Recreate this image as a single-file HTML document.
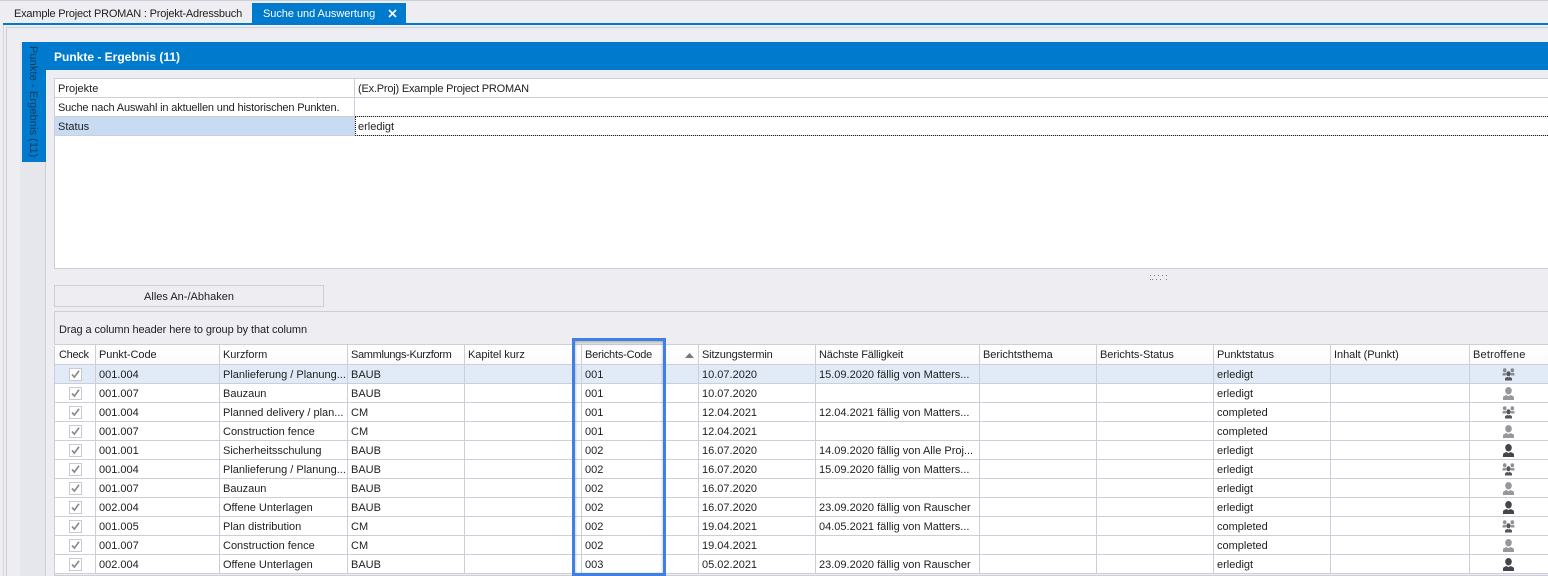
<!DOCTYPE html>
<html><head><meta charset="utf-8"><style>
html,body{margin:0;padding:0}
body{width:1548px;height:576px;overflow:hidden;position:relative;background:#eeeef2;font-family:"Liberation Sans",sans-serif;font-size:11px;color:#1e1e1e}
.a{position:absolute;box-sizing:border-box}
.t{position:absolute;white-space:nowrap;line-height:14px}
table{position:absolute;left:54px;top:345px;border-collapse:collapse;table-layout:fixed;width:1494px;background:#fff}
td,th{box-sizing:border-box;height:19px;padding:2px 0 0 3px;border:1px solid #ccced8;border-top:0;font-weight:normal;text-align:left;white-space:nowrap;overflow:hidden;font-size:11px;line-height:16px}
th{height:19px;padding:0 0 0 3px;line-height:18px;background:linear-gradient(#fff,#fafafa);border-top:1px solid #fff;position:relative;letter-spacing:-.05px}
th:last-child,td:last-child{border-right:0}
td:first-child,th:first-child{padding-left:4px}
tr.s td{background:#e1ebf8}
td:first-child{padding:0;text-align:center}
td svg{display:block;margin:0 auto}
td:last-child{padding:0 2px 0 0}
</style></head><body>
<svg width="0" height="0" style="position:absolute"><defs>
<symbol id="c" viewBox="0 0 13 13"><rect x=".5" y=".5" width="12" height="12" fill="#fff" stroke="#c9c9cf"/><path d="M3 6.500l2.400 2.600L10 2.800" fill="none" stroke="#8a8a8a" stroke-width="1.700"/></symbol>
<symbol id="p" viewBox="0 0 13 13"><ellipse cx="6.500" cy="3.700" rx="3.300" ry="3.700"/><path d="M1 13v-2.300C1 9 3 8.800 4.600 8L6.500 9.300 8.400 8C10 8.800 12 9 12 10.700V13z"/></symbol>
<symbol id="g" viewBox="0 0 13 13"><ellipse cx="2.700" cy="2.300" rx="1.800" ry="2.100" fill-opacity=".65"/><ellipse cx="10.300" cy="2.300" rx="1.800" ry="2.100" fill-opacity=".65"/><path d="M.5 7.500V6C.7 5 1.700 4.800 2.700 5.200 3.500 4.900 4.400 5.200 4.600 6L3.800 7.500zM12.500 7.500V6C12.300 5 11.300 4.800 10.300 5.200 9.500 4.900 8.600 5.200 8.400 6L9.200 7.500z" fill-opacity=".65"/><ellipse cx="6.500" cy="5.800" rx="2.100" ry="2.500"/><path d="M3 12.500v-1.600C3 9.500 5 9.500 5.500 8.800L6.500 9.700l1-.9C8 9.500 10 9.500 10 10.900v1.600z"/></symbol>
</defs></svg>

<div class="a" style="left:0;top:0;width:1548px;height:1px;background:#ccced8"></div>
<div class="t" style="left:14px;top:7px;letter-spacing:-.2px">Example Project PROMAN : Projekt-Adressbuch</div>
<div class="a" style="left:252px;top:3px;width:154px;height:20px;background:#007acc"></div>
<div class="t" style="left:263px;top:7px;color:#fff;letter-spacing:-.05px">Suche und Auswertung</div>
<svg class="a" style="left:388px;top:9px" width="9" height="9" viewBox="0 0 9 9"><path d="M1 1l7 7M8 1L1 8" stroke="#fff" stroke-width="1.600"/></svg>
<div class="a" style="left:3px;top:23px;width:1545px;height:2px;background:#007acc"></div>

<div class="a" style="left:3px;top:25px;width:1545px;height:551px;border-left:1px solid #d6d7de"></div>
<div class="a" style="left:6px;top:27px;width:1542px;height:549px;border-left:1px solid #ccced8;border-top:1px solid #ccced8"></div>
<div class="a" style="left:20px;top:42px;width:26px;height:534px;background:#e6e7ec;border-right:1px solid #ccced8"></div>

<div class="a" style="left:22px;top:42px;width:24px;height:120px;background:#007acc"></div>
<div class="t" style="left:26px;top:46px;writing-mode:vertical-rl;line-height:14px;color:#123a5c;letter-spacing:.1px">Punkte - Ergebnis (11)</div>
<div class="a" style="left:46px;top:42px;width:1502px;height:28px;background:#007acc"></div>
<div class="t" style="left:54px;top:50px;color:#fff;font-weight:bold;font-size:12px">Punkte - Ergebnis (11)</div>

<div class="a" style="left:54px;top:78px;width:1494px;height:191px;background:#fff;border:1px solid #ccced8;border-right:0"></div>
<div class="a" style="left:55px;top:97px;width:1493px;height:1px;background:#ccced8"></div>
<div class="a" style="left:55px;top:116px;width:1493px;height:1px;background:#ccced8"></div>
<div class="a" style="left:55px;top:135px;width:1493px;height:1px;background:#ccced8"></div>
<div class="a" style="left:55px;top:117px;width:299px;height:18px;background:#c7dbf3"></div>
<div class="a" style="left:354px;top:79px;width:1px;height:56px;background:#ccced8"></div>
<div class="a" style="left:355px;top:116px;width:1193px;height:20px;border-top:1px dotted #222;border-bottom:1px dotted #222;border-left:1px dotted #222"></div>
<div class="t" style="left:58px;top:82px">Projekte</div>
<div class="t" style="left:358px;top:82px;letter-spacing:-.2px">(Ex.Proj) Example Project PROMAN</div>
<div class="t" style="left:58px;top:101px;letter-spacing:-.16px">Suche nach Auswahl in aktuellen und historischen Punkten.</div>
<div class="t" style="left:58px;top:120px">Status</div>
<div class="t" style="left:358px;top:120px">erledigt</div>

<svg class="a" style="left:1150px;top:275px" width="18" height="6"><path d="M.5 0v1M4.500 0v1M8.500 0v1M12.500 0v1M16.500 0v1M.5 4v1M2.500 4v1M6.500 4v1M10.500 4v1M16.500 4v1" stroke="#77777f"/></svg>

<div class="a" style="left:54px;top:285px;width:270px;height:22px;border:1px solid #ccced8;background:#eeeef2"></div>
<div class="t" style="left:54px;top:290px;width:270px;text-align:center">Alles An-/Abhaken</div>

<div class="a" style="left:54px;top:311px;width:1494px;height:265px;border:1px solid #ccced8;border-right:0"></div>
<div class="t" style="left:59px;top:323px;letter-spacing:-.08px">Drag a column header here to group by that column</div>

<div class="a" style="left:54px;top:344px;width:1494px;height:1px;background:#ccced8"></div>
<table>
<colgroup><col style="width:41px"><col style="width:124px"><col style="width:128px"><col style="width:117px"><col style="width:117px"><col style="width:117px"><col style="width:117px"><col style="width:164px"><col style="width:117px"><col style="width:117px"><col style="width:117px"><col style="width:139px"><col style="width:79px"></colgroup>
<tr><th style="letter-spacing:-.3px">Check</th><th>Punkt-Code</th><th>Kurzform</th><th style="letter-spacing:-.33px">Sammlungs-Kurzform</th><th>Kapitel kurz</th><th style="letter-spacing:-.2px">Berichts-Code<svg style="position:absolute;right:4px;top:7px" width="9" height="5"><path d="M0 5L4.500 0 9 5z" fill="#77777f"/></svg></th><th style="letter-spacing:-.15px">Sitzungstermin</th><th style="letter-spacing:-.15px">Nächste Fälligkeit</th><th>Berichtsthema</th><th>Berichts-Status</th><th>Punktstatus</th><th>Inhalt (Punkt)</th><th style="letter-spacing:.2px">Betroffene</th></tr>
<tr class="s"><td><svg width="13" height="13"><use href="#c"/></svg></td><td>001.004</td><td>Planlieferung / Planung...</td><td>BAUB</td><td></td><td>001</td><td>10.07.2020</td><td>15.09.2020 fällig von Matters...</td><td></td><td></td><td>erledigt</td><td></td><td><svg width="13" height="13" fill="#55555c"><use href="#g"/></svg></td></tr>
<tr><td><svg width="13" height="13"><use href="#c"/></svg></td><td>001.007</td><td>Bauzaun</td><td>BAUB</td><td></td><td>001</td><td>10.07.2020</td><td></td><td></td><td></td><td>erledigt</td><td></td><td><svg width="13" height="13" fill="#98989c"><use href="#p"/></svg></td></tr>
<tr><td><svg width="13" height="13"><use href="#c"/></svg></td><td>001.004</td><td>Planned delivery / plan...</td><td>CM</td><td></td><td>001</td><td>12.04.2021</td><td>12.04.2021 fällig von Matters...</td><td></td><td></td><td>completed</td><td></td><td><svg width="13" height="13" fill="#55555c"><use href="#g"/></svg></td></tr>
<tr><td><svg width="13" height="13"><use href="#c"/></svg></td><td>001.007</td><td>Construction fence</td><td>CM</td><td></td><td>001</td><td>12.04.2021</td><td></td><td></td><td></td><td>completed</td><td></td><td><svg width="13" height="13" fill="#98989c"><use href="#p"/></svg></td></tr>
<tr><td><svg width="13" height="13"><use href="#c"/></svg></td><td>001.001</td><td>Sicherheitsschulung</td><td>BAUB</td><td></td><td>002</td><td>16.07.2020</td><td>14.09.2020 fällig von Alle Proj...</td><td></td><td></td><td>erledigt</td><td></td><td><svg width="13" height="13" fill="#44444a"><use href="#p"/></svg></td></tr>
<tr><td><svg width="13" height="13"><use href="#c"/></svg></td><td>001.004</td><td>Planlieferung / Planung...</td><td>BAUB</td><td></td><td>002</td><td>16.07.2020</td><td>15.09.2020 fällig von Matters...</td><td></td><td></td><td>erledigt</td><td></td><td><svg width="13" height="13" fill="#55555c"><use href="#g"/></svg></td></tr>
<tr><td><svg width="13" height="13"><use href="#c"/></svg></td><td>001.007</td><td>Bauzaun</td><td>BAUB</td><td></td><td>002</td><td>16.07.2020</td><td></td><td></td><td></td><td>erledigt</td><td></td><td><svg width="13" height="13" fill="#98989c"><use href="#p"/></svg></td></tr>
<tr><td><svg width="13" height="13"><use href="#c"/></svg></td><td>002.004</td><td>Offene Unterlagen</td><td>BAUB</td><td></td><td>002</td><td>16.07.2020</td><td>23.09.2020 fällig von Rauscher</td><td></td><td></td><td>erledigt</td><td></td><td><svg width="13" height="13" fill="#44444a"><use href="#p"/></svg></td></tr>
<tr><td><svg width="13" height="13"><use href="#c"/></svg></td><td>001.005</td><td>Plan distribution</td><td>CM</td><td></td><td>002</td><td>19.04.2021</td><td>04.05.2021 fällig von Matters...</td><td></td><td></td><td>completed</td><td></td><td><svg width="13" height="13" fill="#55555c"><use href="#g"/></svg></td></tr>
<tr><td><svg width="13" height="13"><use href="#c"/></svg></td><td>001.007</td><td>Construction fence</td><td>CM</td><td></td><td>002</td><td>19.04.2021</td><td></td><td></td><td></td><td>completed</td><td></td><td><svg width="13" height="13" fill="#98989c"><use href="#p"/></svg></td></tr>
<tr><td><svg width="13" height="13"><use href="#c"/></svg></td><td>002.004</td><td>Offene Unterlagen</td><td>BAUB</td><td></td><td>003</td><td>05.02.2021</td><td>23.09.2020 fällig von Rauscher</td><td></td><td></td><td>erledigt</td><td></td><td><svg width="13" height="13" fill="#44444a"><use href="#p"/></svg></td></tr>
</table>

<div class="a" style="left:572px;top:338px;width:94px;height:238px;border:3px solid #3f80e4;box-shadow:inset 0 2px 3px rgba(0,0,0,.2),inset 0 0 2px rgba(0,0,0,.15)"></div>
</body></html>
